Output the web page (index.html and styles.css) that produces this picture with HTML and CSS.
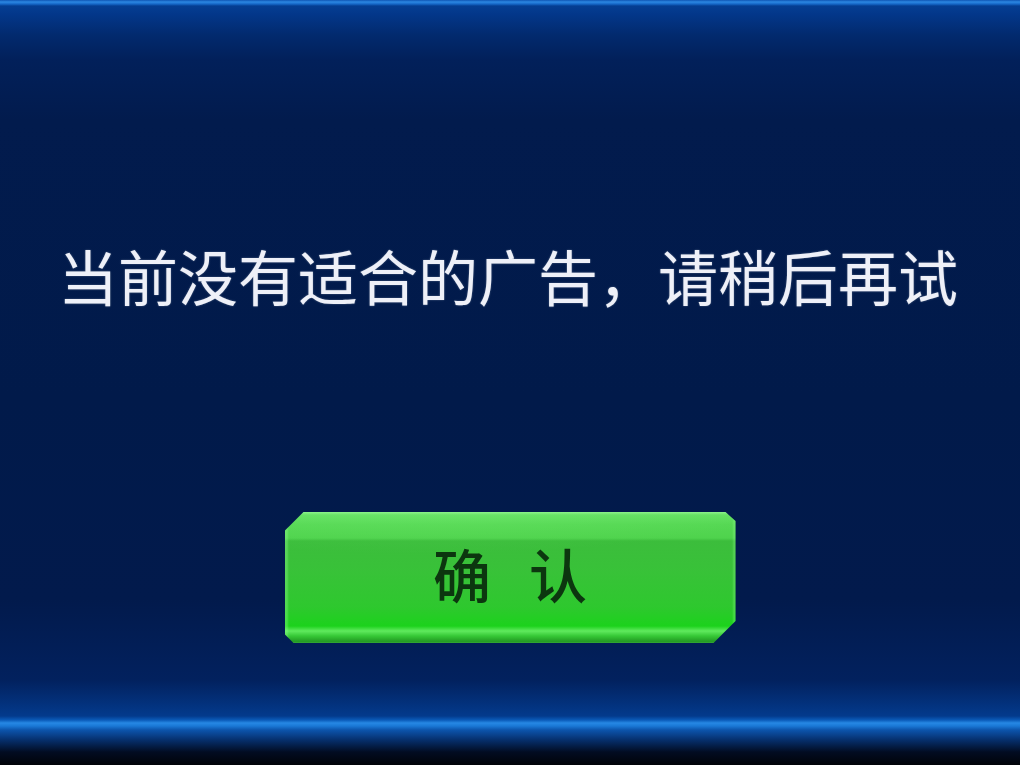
FILE: index.html
```html
<!DOCTYPE html>
<html lang="zh-CN">
<head>
<meta charset="utf-8">
<title>提示</title>
<link rel="stylesheet" href="styles.css">
</head>
<body>
<div class="dialog">
  <p class="message">当前没有适合的广告，请稍后再试</p>
  <button class="confirm" type="button"><span>确</span><span>认</span></button>
</div>
</body>
</html>
```

FILE: styles.css
```css
html, body {
  margin: 0;
  padding: 0;
  width: 1020px;
  height: 765px;
  overflow: hidden;
  background: #000;
}

.dialog {
  width: 1020px;
  height: 765px;
  display: flex;
  flex-direction: column;
  align-items: center;
  background: linear-gradient(to bottom,
    #0f56b4 0px,
    #2c88e2 2px,
    #1668c8 4px,
    #053e92 6px,
    #03378a 14px,
    #022a6e 35px,
    #02205a 60px,
    #021b4d 120px,
    #011a4a 400px,
    #021a4c 600px,
    #02215e 680px,
    #033a8c 716px,
    #0a5ab8 720px,
    #2688e4 723px,
    #1a78d6 726px,
    #0c54ac 730px,
    #062f6c 740px,
    #020c22 752px,
    #010308 765px);
}

.message {
  margin: 245px 0 0;
  padding-right: 4px;
  font-family: "Noto Sans CJK SC", "Noto Sans", sans-serif;
  font-size: 60px;
  line-height: 60px;
  color: #eef0f8;
  white-space: nowrap;
  text-shadow: 0 0 2px rgba(255, 255, 255, 0.35);
}

.confirm {
  margin-top: 207px;
  width: 451px;
  height: 131px;
  border: 0;
  padding: 0 0 10px 0;
  display: flex;
  justify-content: center;
  align-items: center;
  gap: 38px;
  font-family: "Noto Sans CJK SC", sans-serif;
  font-size: 58px;
  font-weight: 500;
  color: #0c360f;
  clip-path: polygon(19px 0, 441px 0, 451px 9px, 451px 109px, 429px 131px, 9px 131px, 0 122px, 0 19px);
  background:
    radial-gradient(ellipse 120% 60% at 30% -10%, rgba(140, 255, 140, 0.18), rgba(140, 255, 140, 0) 70%),
    linear-gradient(to bottom,
      #8cf08a 0px,
      #64e062 3px,
      #56d854 12px,
      #4fd34d 26px,
      #3cbd3c 29px,
      #38c238 60px,
      #2ec82e 95px,
      #1cd21c 114px,
      #60ea5e 119px,
      #36c836 124px,
      #1e8e1e 131px);
  box-shadow: inset 3px 0 2px rgba(150, 255, 150, 0.35), inset -3px 0 2px rgba(150, 255, 150, 0.3);
}
```
